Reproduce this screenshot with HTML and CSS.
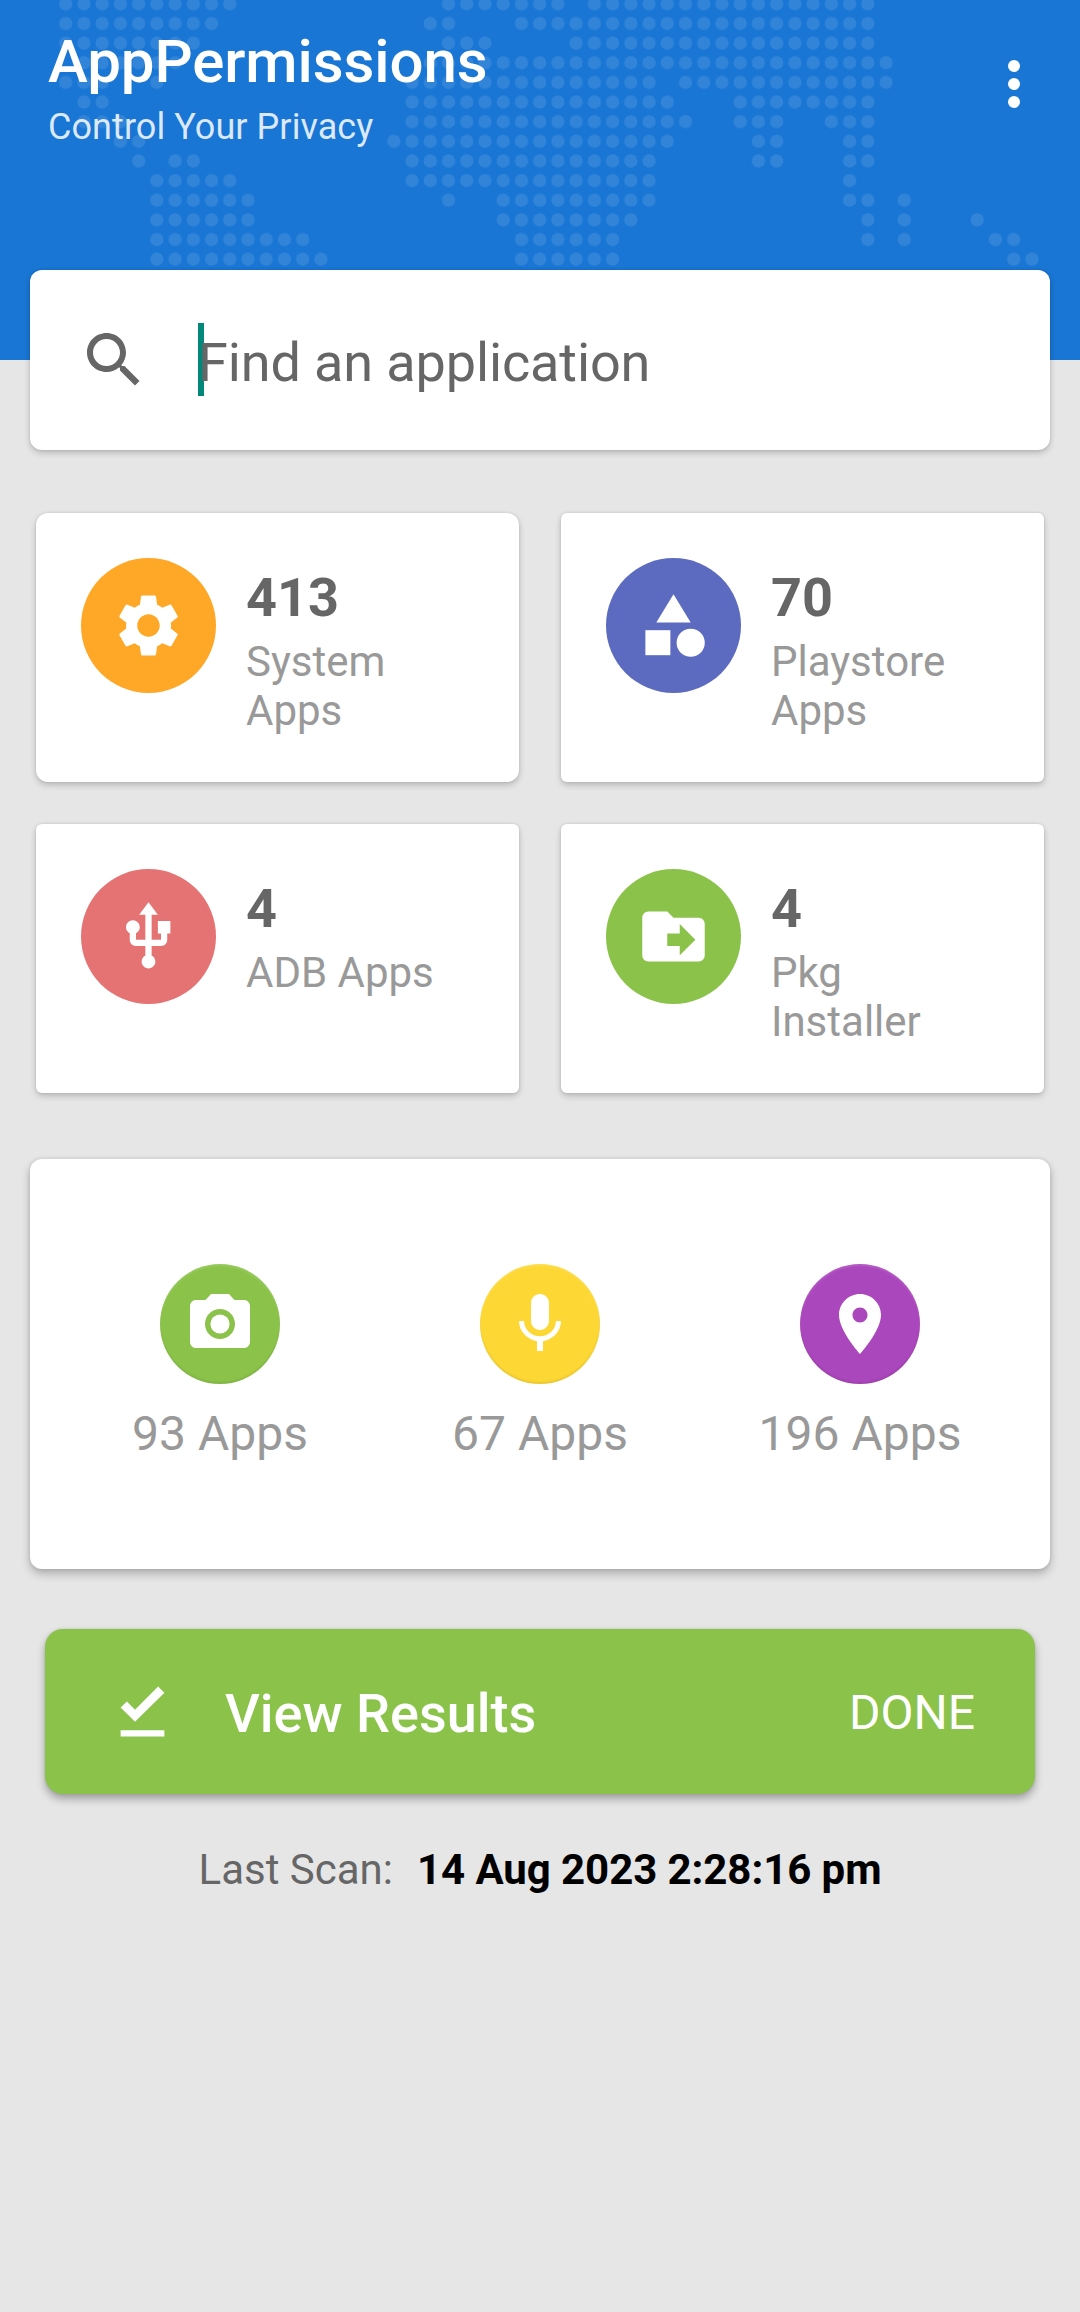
FILE: index.html
```html
<!DOCTYPE html>
<html lang="en">
<head>
<meta charset="utf-8">
<title>AppPermissions</title>
<link rel="stylesheet" href="styles.css">
</head>
<body>
<header class="header">
  <svg class="map" width="1080" height="360" aria-hidden="true">
    <defs>
      <pattern id="dots" x="56.6" y="-6" width="18.23" height="19.64" patternUnits="userSpaceOnUse">
        <circle cx="9.11" cy="9.82" r="6.7" fill="#fff"/>
      </pattern>
      <mask id="land" maskUnits="userSpaceOnUse" x="0" y="0" width="1080" height="360">
        <path transform="translate(56.6 -6) scale(18.23 19.64)" stroke="#fff" stroke-width="1" fill="none" d="M0 .5H10M21 .5H28M29 .5H45
          M0 1.5H9M20 1.5H22M25 1.5H45
          M0 2.5H8M21 2.5H24M28 2.5H45
          M1 3.5H7M20 3.5H46
          M0 4.5H3M5 4.5H6M19 4.5H33M34 4.5H46
          M1 5.5H3M19 5.5H34M37 5.5H45
          M1 6.5H4M19 6.5H35M37 6.5H40M42 6.5H45
          M3 7.5H5M18 7.5H34M38 7.5H40M43 7.5H45
          M4 8.5H5M6 8.5H8M19 8.5H33M38 8.5H40M43 8.5H45
          M5 9.5H10M19 9.5H33M43 9.5H44
          M5 10.5H11M21 10.5H22M24 10.5H33M43 10.5H45M46 10.5H47
          M5 11.5H11M24 11.5H32M44 11.5H45M46 11.5H47M50 11.5H51
          M5 12.5H14M25 12.5H31M44 12.5H45M46 12.5H47M51 12.5H53
          M5 13.5H15M25 13.5H31M52 13.5H54"/>
      </mask>
    </defs>
    <rect width="1080" height="360" fill="url(#dots)" mask="url(#land)" opacity=".105"/>
  </svg>
  <div class="titles">
    <h1 class="title">AppPermissions</h1>
    <p class="subtitle">Control Your Privacy</p>
  </div>
  <svg class="menu" viewBox="0 0 24 24"><circle cx="12" cy="6" r="2"/><circle cx="12" cy="12" r="2"/><circle cx="12" cy="18" r="2"/></svg>
</header>
<main class="main">
  <div class="search card">
    <svg class="search-icon" viewBox="0 0 24 24"><path d="M15.5 14h-.79l-.28-.27C15.41 12.59 16 11.11 16 9.5 16 5.91 13.09 3 9.5 3S3 5.91 3 9.5 5.91 16 9.5 16c1.61 0 3.09-.59 4.23-1.57l.27.28v.79l5 4.99L20.49 19l-4.99-5zm-6 0C7.01 14 5 11.99 5 9.5S7.01 5 9.5 5 14 7.01 14 9.5 11.99 14 9.5 14z"/></svg>
    <span class="caret"></span>
    <span class="hint">Find an application</span>
  </div>

  <div class="grid">
    <section class="tile card tile-first">
      <div class="badge orange"><svg viewBox="0 0 24 24"><path d="M19.14 12.94c.04-.3.06-.61.06-.94 0-.32-.02-.64-.07-.94l2.03-1.58c.18-.14.23-.41.12-.61l-1.92-3.32c-.12-.22-.37-.29-.59-.22l-2.39.96c-.5-.38-1.03-.7-1.62-.94l-.36-2.54c-.04-.24-.24-.41-.48-.41h-3.84c-.24 0-.43.17-.47.41l-.36 2.54c-.59.24-1.13.57-1.62.94l-2.39-.96c-.22-.08-.47 0-.59.22L2.74 8.87c-.12.21-.08.47.12.61l2.03 1.58c-.05.3-.09.63-.09.94s.02.64.07.94l-2.03 1.58c-.18.14-.23.41-.12.61l1.92 3.32c.12.22.37.29.59.22l2.39-.96c.5.38 1.03.7 1.62.94l.36 2.54c.05.24.24.41.48.41h3.84c.24 0 .44-.17.47-.41l.36-2.54c.59-.24 1.13-.56 1.62-.94l2.39.96c.22.08.47 0 .59-.22l1.92-3.32c.12-.22.07-.47-.12-.61l-2.01-1.58zM12 15.6c-1.98 0-3.6-1.62-3.6-3.6s1.62-3.6 3.6-3.6 3.6 1.62 3.6 3.6-1.62 3.6-3.6 3.6z"/></svg></div>
      <div class="info"><div class="count">413</div><div class="label">System Apps</div></div>
    </section>
    <section class="tile card">
      <div class="badge indigo"><svg viewBox="0 0 24 24"><path d="M12 2l-5.5 9h11z"/><circle cx="17.5" cy="17.5" r="4.5"/><path d="M3 13.5h8v8H3z"/></svg></div>
      <div class="info"><div class="count">70</div><div class="label">Playstore Apps</div></div>
    </section>
    <section class="tile card">
      <div class="badge red"><svg viewBox="0 0 24 24"><path d="M15 7v4h1v2h-3V5h2l-3-4-3 4h2v8H8v-2.07c.7-.37 1.2-1.08 1.2-1.93 0-1.21-.99-2.2-2.2-2.2-1.21 0-2.2.99-2.2 2.2 0 .85.5 1.56 1.2 1.93V13c0 1.11.89 2 2 2h3v3.05c-.71.37-1.2 1.1-1.2 1.95 0 1.22.99 2.2 2.2 2.2 1.21 0 2.2-.98 2.2-2.2 0-.85-.49-1.58-1.2-1.95V15h3c1.11 0 2-.89 2-2v-2h1V7h-4z"/></svg></div>
      <div class="info"><div class="count">4</div><div class="label">ADB Apps</div></div>
    </section>
    <section class="tile card">
      <div class="badge green"><svg viewBox="0 0 24 24"><path d="M20 6h-8l-2-2H4c-1.1 0-1.99.9-1.99 2L2 18c0 1.1.9 2 2 2h16c1.1 0 2-.9 2-2V8c0-1.1-.9-2-2-2zm-6 12v-3h-4v-4h4V8l5 5-5 5z"/></svg></div>
      <div class="info"><div class="count">4</div><div class="label">Pkg Installer</div></div>
    </section>
  </div>

  <section class="sensors card">
    <div class="sensor">
      <div class="disc green"><svg viewBox="0 0 24 24"><circle cx="12" cy="12" r="3.2"/><path d="M9 2L7.17 4H4c-1.1 0-2 .9-2 2v12c0 1.1.9 2 2 2h16c1.1 0 2-.9 2-2V6c0-1.1-.9-2-2-2h-3.17L15 2H9zm3 15c-2.76 0-5-2.24-5-5s2.24-5 5-5 5 2.24 5 5-2.24 5-5 5z"/></svg></div>
      <span class="sensor-label">93 Apps</span>
    </div>
    <div class="sensor">
      <div class="disc yellow"><svg viewBox="0 0 24 24"><path d="M12 14c1.66 0 2.99-1.34 2.99-3L15 5c0-1.66-1.34-3-3-3S9 3.34 9 5v6c0 1.66 1.34 3 3 3zM17.3 11c0 3-2.54 5.1-5.3 5.1S6.7 14 6.7 11H5c0 3.41 2.72 6.23 6 6.72V21h2v-3.28c3.28-.48 6-3.3 6-6.72h-1.7z"/></svg></div>
      <span class="sensor-label">67 Apps</span>
    </div>
    <div class="sensor">
      <div class="disc purple"><svg viewBox="0 0 24 24"><path d="M12 2C8.13 2 5 5.13 5 9c0 5.25 7 13 7 13s7-7.75 7-13c0-3.87-3.13-7-7-7zm0 9.5c-1.38 0-2.5-1.12-2.5-2.5s1.12-2.5 2.5-2.5 2.5 1.12 2.5 2.5-1.12 2.5-2.5 2.5z"/></svg></div>
      <span class="sensor-label">196 Apps</span>
    </div>
  </section>

  <div class="results">
    <svg class="results-icon" viewBox="0 0 24 24"><path d="M5 18h14v2H5v-2zm4.6-2.7L5 10.7l2-1.9 2.6 2.6L17 4l2 2-9.4 9.3z"/></svg>
    <span class="results-title">View Results</span>
    <span class="results-state">DONE</span>
  </div>

  <p class="last-scan"><span>Last Scan:</span><b>14 Aug 2023 2:28:16 pm</b></p>
</main>
</body>
</html>
```
FILE: styles.css
```css
* { box-sizing: border-box; margin: 0; padding: 0; }
body {
  min-height: 2312px;
  background: #e6e6e6;
  color: #666;
  font-family: Roboto, "Liberation Sans", sans-serif;
}
svg { display: block; }

.header {
  position: relative;
  display: flex;
  justify-content: space-between;
  align-items: flex-start;
  height: 360px;
  padding: 26px 30px 0 48px;
  background: #1976d4;
}
.map { position: absolute; inset: 0; }
.titles { position: relative; }
.title { color: #fff; font-size: 60px; font-weight: 500; line-height: 72px; letter-spacing: -.1px; }
.subtitle { margin-top: 8px; color: rgba(255, 255, 255, .85); font-size: 36px; line-height: 42px; letter-spacing: .07px; }
.menu { position: relative; width: 72px; height: 72px; margin-top: 22px; fill: #fff; }

.main { display: flex; flex-direction: column; margin-top: -90px; padding: 0 30px; position: relative; }
.card {
  border-radius: 12px;
  background: #fff;
  box-shadow: 0 3px 6px rgba(0, 0, 0, .2), 0 0 3px rgba(0, 0, 0, .1);
}

.search { display: flex; align-items: center; height: 180px; padding-left: 48px; }
.search-icon { width: 72px; height: 72px; fill: #666; }
.caret { width: 6px; height: 73px; margin-left: 48px; margin-right: -6px; margin-bottom: 1px; background: #00897b; }
.hint { padding-top: 6px; font-size: 54px; line-height: 64px; letter-spacing: -.12px; }

.grid { display: grid; grid-template-columns: 483px 483px; gap: 42px; margin: 63px 6px 0; }
.tile { display: flex; gap: 30px; height: 269px; padding: 45px; border-radius: 6px; }
.tile-first { border-radius: 12px; }
.badge { display: flex; flex: none; align-items: center; justify-content: center; width: 135px; height: 135px; border-radius: 50%; }
.badge svg { width: 75px; height: 75px; fill: #fff; }
.info { padding-top: 8px; width: 200px; }
.count { font-size: 54px; font-weight: 700; line-height: 63px; }
.label { margin-top: 8px; color: #999; font-size: 42px; line-height: 49px; }

.orange { background: #ffa726; }
.indigo { background: #5c6bc0; }
.red { background: #e57373; }
.green { background: #8bc34a; }
.yellow { background: #fdd835; }
.purple { background: #ab47bc; }

.sensors {
  display: grid;
  grid-template-columns: repeat(3, 1fr);
  height: 410px;
  margin-top: 66px;
  padding: 105px 30px 0;
  box-shadow: 0 5px 10px rgba(0, 0, 0, .24), 0 0 4px rgba(0, 0, 0, .12);
}
.sensor { display: flex; flex-direction: column; align-items: center; gap: 22px; }
.disc {
  display: flex;
  align-items: center;
  justify-content: center;
  width: 120px;
  height: 120px;
  border-radius: 50%;
  box-shadow: inset 0 -2px 2px rgba(0, 0, 0, .08), inset 0 2px 2px rgba(255, 255, 255, .12);
}
.disc svg { width: 72px; height: 72px; fill: #fff; }
.sensor-label { color: #999; font-size: 48px; line-height: 56px; }

.results {
  display: flex;
  align-items: center;
  height: 165px;
  margin: 60px 15px 0;
  padding: 0 60px;
  border-radius: 18px;
  background: #8bc34a;
  color: #fff;
  box-shadow: 0 5px 9px rgba(0, 0, 0, .3), 0 0 3px rgba(0, 0, 0, .1);
}
.results-icon { width: 75px; height: 75px; fill: #fff; }
.results-title { margin-left: 45px; padding-top: 5px; font-size: 54px; font-weight: 500; line-height: 64px; }
.results-state { margin-left: auto; padding-top: 3px; font-size: 48px; line-height: 56px; }

.last-scan { display: flex; justify-content: center; gap: 24px; margin-top: 51px; font-size: 42px; line-height: 49px; }
.last-scan b { color: #000; font-weight: 700; letter-spacing: -.07px; }
```
